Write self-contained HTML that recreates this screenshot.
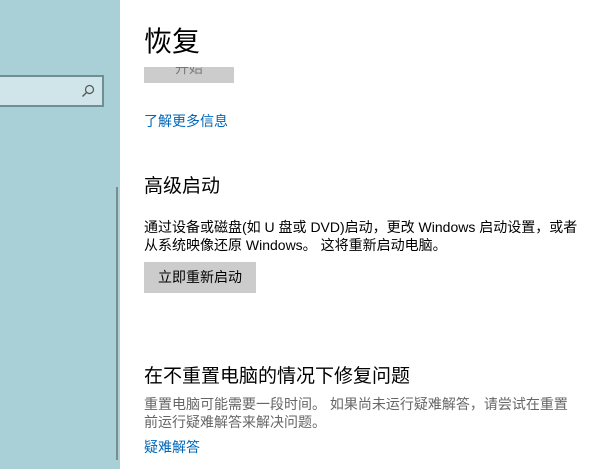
<!DOCTYPE html>
<html><head><meta charset="utf-8"><style>
*{margin:0;padding:0;box-sizing:border-box}
body{width:600px;height:469px;overflow:hidden;background:#fff;font-family:"Liberation Sans","Noto Sans CJK SC",sans-serif;position:relative;color:#000}
.side{position:absolute;left:0;top:0;width:120px;height:469px;background:#a9d0d6}
.search{position:absolute;left:-2px;top:75px;width:106px;height:32px;background:#cfe5e9;border:2px solid #6f8f95}
.sb{position:absolute;left:116px;top:187px;width:2px;height:273px;background:#7c8c8f}
.t{position:absolute;left:144px;white-space:nowrap}
.btn{position:absolute;background:#cccccc;font-size:14px;color:#000;text-align:center}
.link{color:#0067b8;font-size:14px}
.p{font-size:14px;line-height:18px}
.g{color:#666}
</style></head><body>
<div class="side"><div class="search">
<svg style="position:absolute;left:81px;top:7px" width="14" height="14" viewBox="0 0 14 14"><circle cx="8.5" cy="5.5" r="4" fill="none" stroke="#555" stroke-width="1.2"/><line x1="5.5" y1="8.5" x2="1.5" y2="12.5" stroke="#555" stroke-width="1.3"/></svg>
</div></div>
<div class="sb"></div>
<div class="t" style="top:24px;font-size:28px;line-height:36px">恢复</div>
<div class="btn" style="left:144px;top:67px;width:90px;height:16px;overflow:hidden"><span style="position:relative;top:-9px;color:#777">开始</span></div>
<div class="t link" style="top:111px">了解更多信息</div>
<div class="t" style="top:171px;font-size:19px">高级启动</div>
<div class="t p" style="top:218px">通过设备或磁盘(如 U 盘或 DVD)启动，更改 Windows 启动设置，或者<br>从系统映像还原 Windows。 这将重新启动电脑。</div>
<div class="btn" style="left:144px;top:262px;width:112px;height:31px;line-height:31px">立即重新启动</div>
<div class="t" style="top:361px;font-size:19px">在不重置电脑的情况下修复问题</div>
<div class="t p g" style="top:395px">重置电脑可能需要一段时间。 如果尚未运行疑难解答，请尝试在重置<br>前运行疑难解答来解决问题。</div>
<div class="t link" style="top:437px">疑难解答</div>
</body></html>
